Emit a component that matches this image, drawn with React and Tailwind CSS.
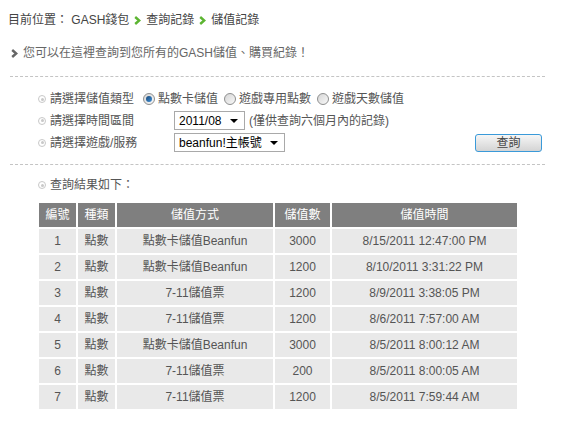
import React from "react";

const rows = [
  ["1", "點數", "點數卡儲值Beanfun", "3000", "8/15/2011 12:47:00 PM"],
  ["2", "點數", "點數卡儲值Beanfun", "1200", "8/10/2011 3:31:22 PM"],
  ["3", "點數", "7-11儲值票", "1200", "8/9/2011 3:38:05 PM"],
  ["4", "點數", "7-11儲值票", "1200", "8/6/2011 7:57:00 AM"],
  ["5", "點數", "點數卡儲值Beanfun", "3000", "8/5/2011 8:00:12 AM"],
  ["6", "點數", "7-11儲值票", "200", "8/5/2011 8:00:05 AM"],
  ["7", "點數", "7-11儲值票", "1200", "8/5/2011 7:59:44 AM"],
];

function Chevron({ color }) {
  return (
    <svg width="7" height="9" viewBox="0 0 7 9" className="shrink-0">
      <path d="M1.2 1 L5.2 4.5 L1.2 8" fill="none" stroke={color} strokeWidth="2.4" />
    </svg>
  );
}

function Bullet() {
  return (
    <span className="w-[8px] h-[8px] rounded-full border border-[#c8c8c8] flex items-center justify-center shrink-0">
      <span className="w-[3px] h-[3px] rounded-full bg-[#c8c8c8]" />
    </span>
  );
}

function Radio({ checked }) {
  return (
    <span className="w-[12px] h-[12px] rounded-full border border-[#8e8f8f] bg-gradient-to-br from-[#d6d6d6] to-[#f8f8f8] flex items-center justify-center shrink-0">
      {checked ? (
        <span className="w-[6px] h-[6px] rounded-full bg-gradient-to-br from-[#1a4a7a] to-[#3d8fd8]" />
      ) : null}
    </span>
  );
}

function Select({ value, width }) {
  return (
    <div
      className={`${width} h-[19px] border border-[#a9a9a9] bg-white flex items-center justify-between pl-[4px] pr-[6px] text-[12px] text-black`}
    >
      <span className="whitespace-nowrap">{value}</span>
      <span className="w-0 h-0 border-l-[4px] border-r-[4px] border-t-[4px] border-l-transparent border-r-transparent border-t-black shrink-0" />
    </div>
  );
}

export default function App() {
  return (
    <div className="w-[587px] h-[429px] bg-white overflow-hidden text-[12px] text-[#555] font-['Liberation_Sans','Noto_Sans_CJK_TC',sans-serif]">
      {/* breadcrumb */}
      <div className="flex items-center h-[16px] mt-[12px] ml-[8px] text-[#444] gap-[5px]">
        <span>目前位置： GASH錢包</span>
        <Chevron color="#5cb531" />
        <span>查詢記錄</span>
        <Chevron color="#5cb531" />
        <span>儲值記錄</span>
      </div>

      <div className="flex items-center h-[16px] mt-[17px] ml-[11px] gap-[5px] text-[#666]">
        <Chevron color="#666" />
        <span>您可以在這裡查詢到您所有的GASH儲值、購買紀錄！</span>
      </div>

      <div className="ml-[10px] w-[535px] mt-[15px] border-t border-dashed border-[#c4c4c4]" />

      {/* form */}
      <div className="ml-[38px] mt-[14px] flex flex-col">
        <div className="flex items-center h-[16px]">
          <Bullet />
          <span className="ml-[4px]">請選擇儲值類型</span>
          <span className="ml-[9px]"><Radio checked /></span>
          <span className="ml-[3px]">點數卡儲值</span>
          <span className="ml-[6px]"><Radio /></span>
          <span className="ml-[3px]">遊戲專用點數</span>
          <span className="ml-[6px]"><Radio /></span>
          <span className="ml-[3px]">遊戲天數儲值</span>
        </div>
        <div className="flex items-center h-[19px] mt-[4px]">
          <Bullet />
          <span className="ml-[4px] w-[124px]">請選擇時間區間</span>
          <Select value="2011/08" width="w-[71px]" />
          <span className="ml-[4px]">(僅供查詢六個月內的記錄)</span>
        </div>
        <div className="flex items-center h-[19px] mt-[3px] w-[504px]">
          <Bullet />
          <span className="ml-[4px] w-[124px]">請選擇遊戲/服務</span>
          <Select value="beanfun!主帳號" width="w-[111px]" />
          <button className="ml-auto w-[67px] h-[18px] rounded-[3px] border border-[#3a9ad9] bg-gradient-to-b from-[#f6f6f6] to-[#d4d4d4] text-[12px] text-[#444] leading-none">
            查詢
          </button>
        </div>
      </div>

      <div className="ml-[10px] w-[535px] mt-[12px] border-t border-dashed border-[#c4c4c4]" />

      <div className="flex items-center h-[16px] mt-[12px] ml-[38px]">
        <Bullet />
        <span className="ml-[4px]">查詢結果如下：</span>
      </div>

      {/* table */}
      <div className="ml-[39px] mt-[10px] w-[478px] grid grid-cols-[37px_37px_156px_55px_185px] gap-[2px] text-center">
        {["編號", "種類", "儲值方式", "儲值數", "儲值時間"].map((h) => (
          <div key={h} className="h-[24px] bg-[#7f7f7f] text-white flex items-center justify-center">
            {h}
          </div>
        ))}
        {rows.map((r) =>
          r.map((c, i) => (
            <div key={r[0] + "-" + i} className="h-[24px] bg-[#e9e9e9] flex items-center justify-center">
              {c}
            </div>
          ))
        )}
      </div>
    </div>
  );
}
